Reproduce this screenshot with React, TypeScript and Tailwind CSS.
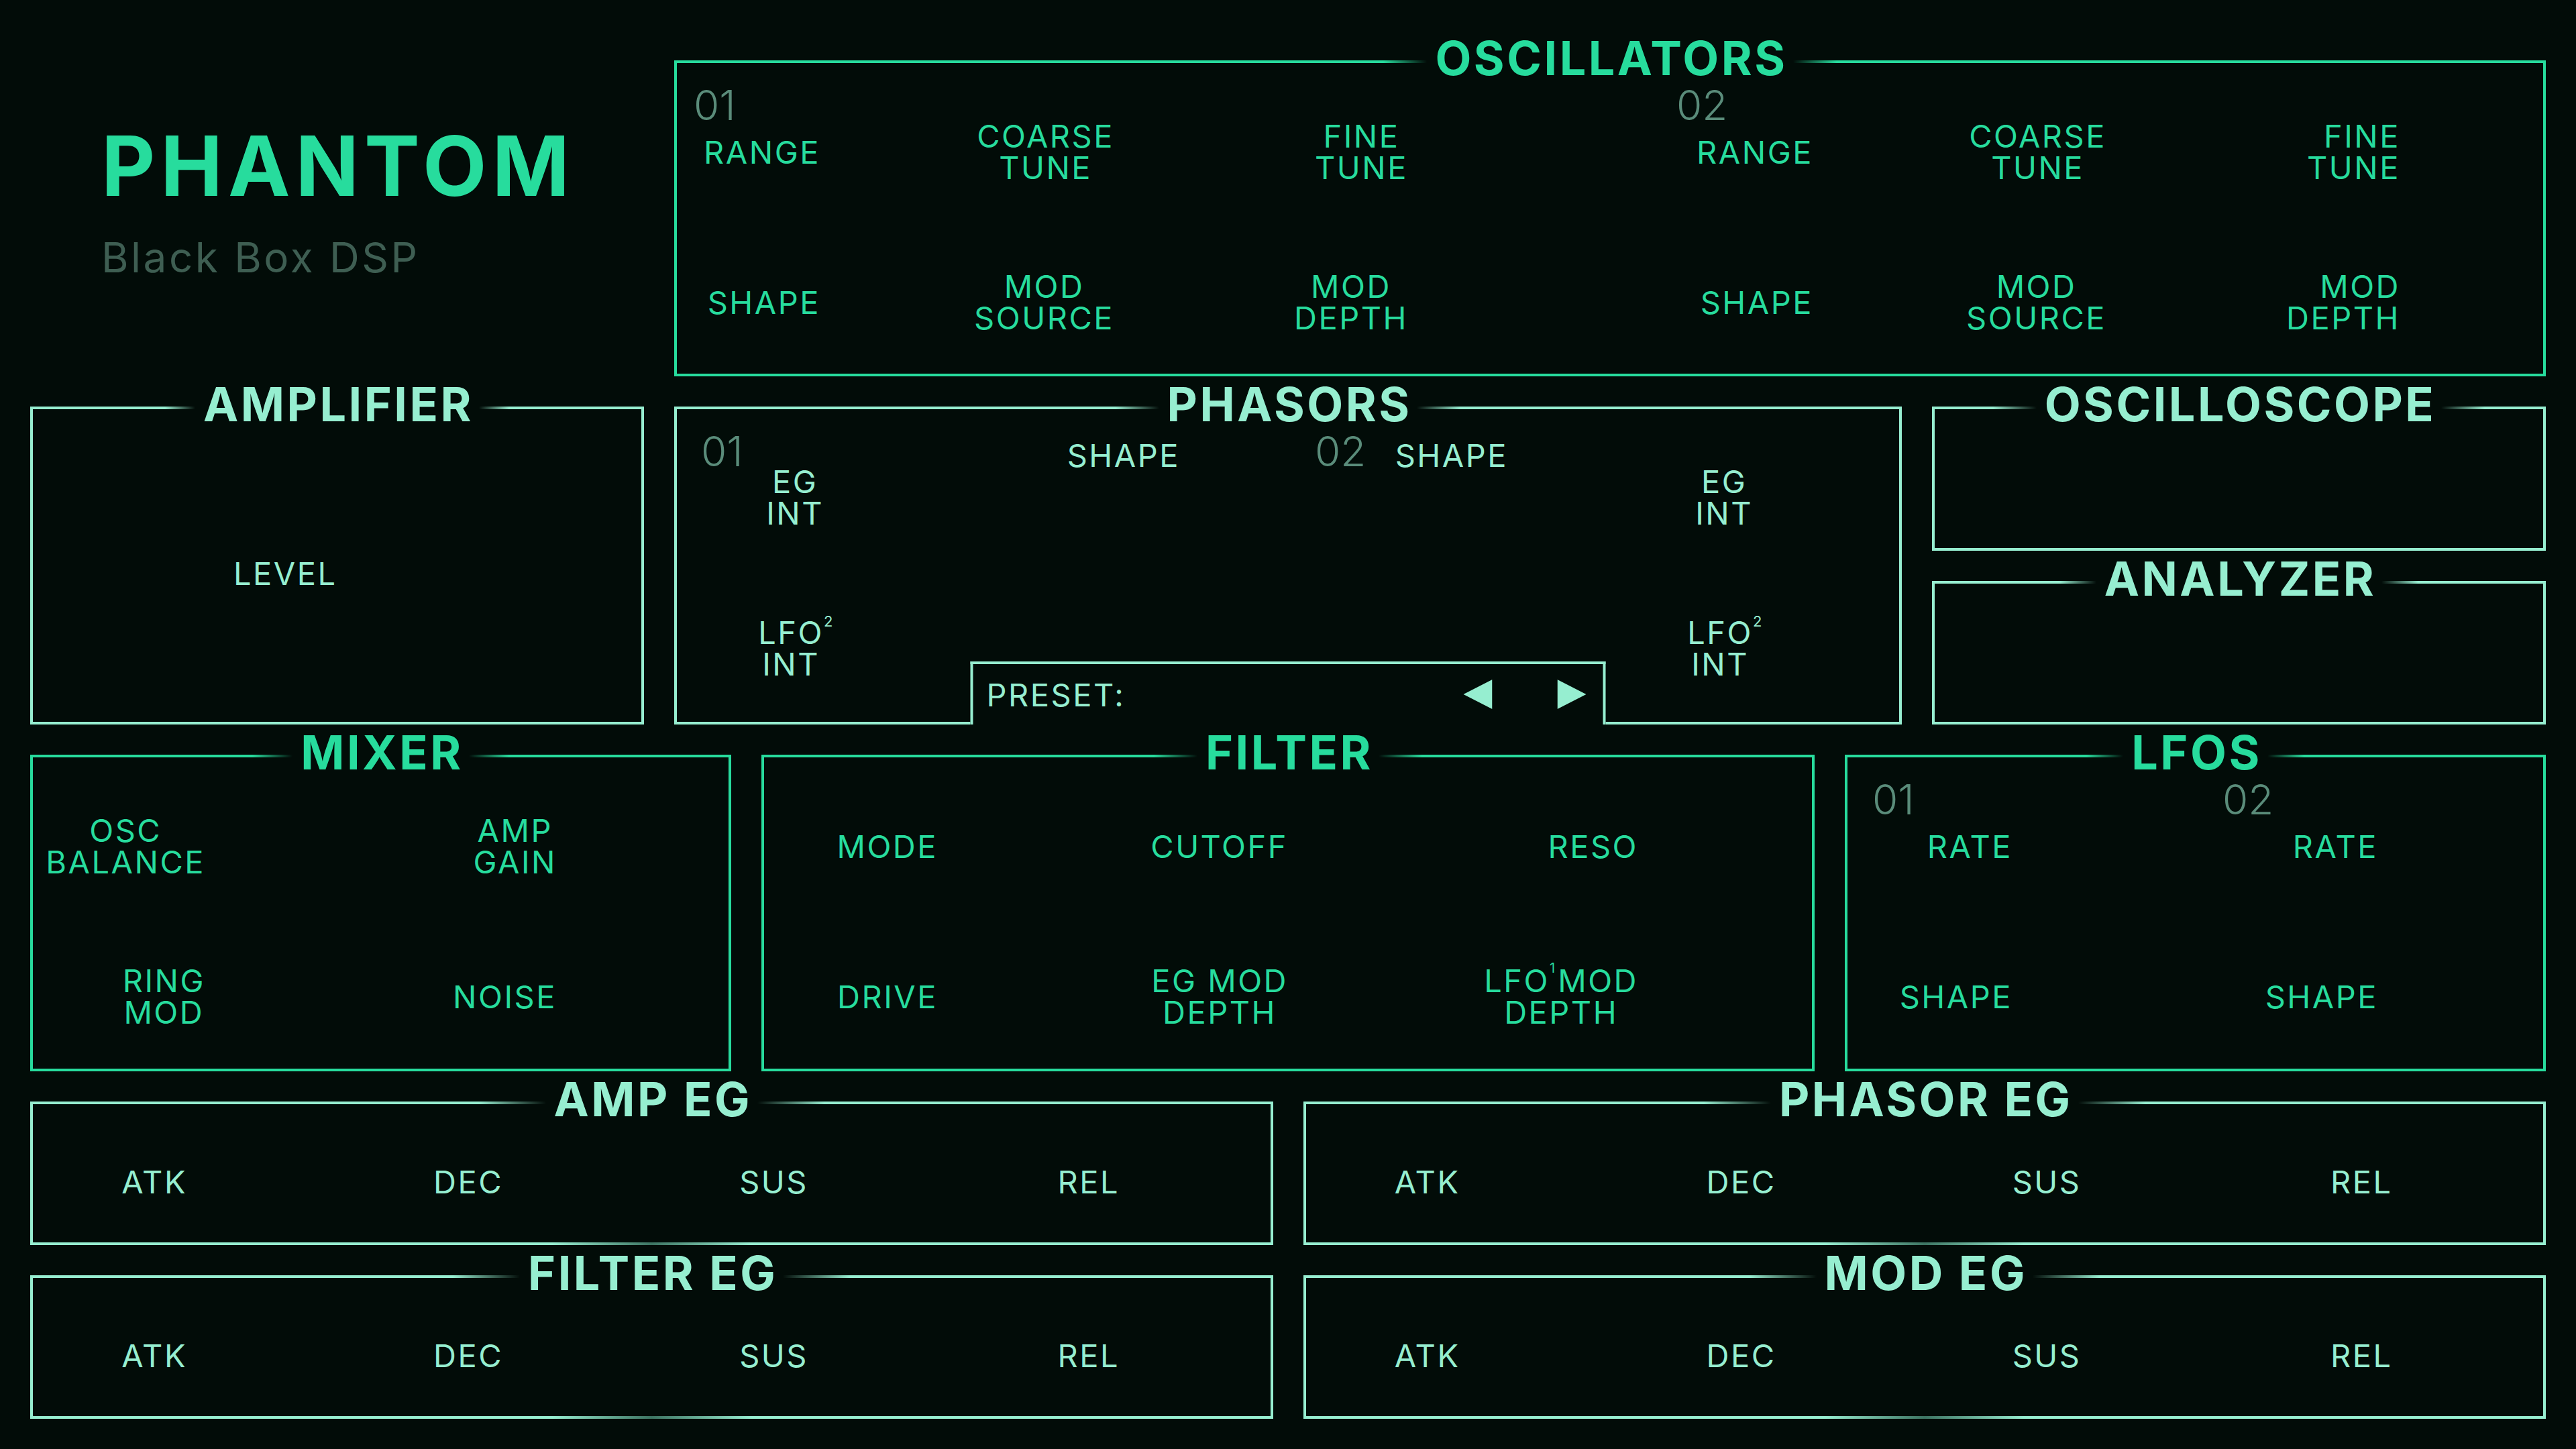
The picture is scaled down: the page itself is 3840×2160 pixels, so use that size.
import React from "react";

type Tone = "green" | "mint";

const tones = {
    green: {
        text: "text-[#27dc9d]",
        bg: "bg-[#27dc9d]",
        from: "from-[#27dc9d]",
        border: "border-[#27dc9d]",
        dim: "bg-[linear-gradient(to_right,#27dc9d_42%,#1d6e52_50%,#27dc9d_58%)]",
    },
    mint: {
        text: "text-[#96eed0]",
        bg: "bg-[#96eed0]",
        from: "from-[#96eed0]",
        border: "border-[#96eed0]",
        dim: "bg-[linear-gradient(to_right,#96eed0_42%,#3d7563_50%,#96eed0_58%)]",
    },
};

interface PanelProps {
    title: string;
    tone: Tone;
    fade?: string;
    dim?: boolean;
    bodyClassName?: string;
    children?: React.ReactNode;
}

// Box with the title sitting on the top line, line fading out next to the title
function Panel({ title, tone, fade = "w-[60px]", dim = false, bodyClassName = "", children }: PanelProps) {
    const t = tones[tone];
    return (
        <div className="flex min-w-0 flex-col">
            <div className="flex h-[4px] items-center">
                <div className="flex h-full flex-1">
                    <div className={`h-full flex-1 ${t.bg}`} />
                    <div className={`h-full ${fade} bg-linear-to-r ${t.from} to-transparent`} />
                </div>
                <h2 className={`mb-[10px] whitespace-nowrap pl-[12px] pr-[8px] text-[70px] font-bold leading-none tracking-[3.5px] ${t.text}`}>
                    {title}
                </h2>
                <div className="flex h-full flex-1">
                    <div className={`h-full ${fade} bg-linear-to-l ${t.from} to-transparent`} />
                    <div className={`h-full flex-1 ${t.bg}`} />
                </div>
            </div>
            <div className={`relative flex-1 border-x-4 ${dim ? "" : "border-b-4"} ${t.border} ${t.text} ${bodyClassName}`}>
                {children}
            </div>
            {dim && <div className={`h-[4px] ${t.dim}`} />}
        </div>
    );
}

function Label({ children, className = "" }: { children: React.ReactNode; className?: string }) {
    return (
        <div className={`flex items-center justify-end ${className}`}>
            <span className="whitespace-nowrap text-center text-[47px] leading-[47px] tracking-[2.5px]">{children}</span>
        </div>
    );
}

function Num({ children, className = "" }: { children: React.ReactNode; className?: string }) {
    return <span className={`text-[62px] font-light leading-none text-[#5a8c7a] ${className}`}>{children}</span>;
}

// superscript that does not take up width (hangs off "LFO")
function HangSup({ n }: { n: string }) {
    return <span className="inline-block w-0 -translate-y-[4px] align-top text-[22px] leading-none tracking-normal">{n}</span>;
}

function Envelope({ title }: { title: string }) {
    return (
        <Panel title={title} tone="mint" fade="w-[100px]" dim bodyClassName="grid grid-cols-[230px_471px_455px_464px_1fr] items-center pt-[24px]">
            <Label>ATK</Label>
            <Label>DEC</Label>
            <Label>SUS</Label>
            <Label>REL</Label>
        </Panel>
    );
}

export default function App() {
    return (
        <div className="min-h-screen w-full bg-[#020c08] px-[45px] pb-[45px] pt-[90px] font-['Inter','Noto_Sans',sans-serif]">
            <div className="flex flex-col gap-[45px]">
                {/* Row 1: logo + oscillators */}
                <div className="grid h-[471px] grid-cols-[915px_1fr] gap-x-[45px]">
                    <div className="flex flex-col items-start pl-[106px] pt-[95px]">
                        <h1 className="text-[124px] font-bold leading-none tracking-[8px] text-[#27dc9d]">PHANTOM</h1>
                        <p className="mt-[44px] text-[62px] leading-none tracking-[3.5px] text-[#3e5e52]">Black Box DSP</p>
                    </div>
                    <Panel title="OSCILLATORS" tone="green" fade="w-[65px]">
                        <div className="grid grid-cols-[214px_438px_438px_604px_437px_1fr] grid-rows-[62px_76px_148px_76px] pt-[32px]">
                            <Num className="col-start-1 row-start-1 ml-[25px]">01</Num>
                            <Num className="col-start-4 row-start-1 ml-[400px]">02</Num>
                            <Label className="col-start-1 row-start-2">RANGE</Label>
                            <Label className="col-start-2 row-start-2">COARSE<br />TUNE</Label>
                            <Label className="col-start-3 row-start-2">FINE<br />TUNE</Label>
                            <Label className="col-start-4 row-start-2">RANGE</Label>
                            <Label className="col-start-5 row-start-2">COARSE<br />TUNE</Label>
                            <Label className="col-start-6 row-start-2 justify-self-start">
                                <span className="inline-block w-[438px] text-right">FINE<br />TUNE</span>
                            </Label>
                            <Label className="col-start-1 row-start-4">SHAPE</Label>
                            <Label className="col-start-2 row-start-4">MOD<br />SOURCE</Label>
                            <Label className="col-start-3 row-start-4">MOD<br />DEPTH</Label>
                            <Label className="col-start-4 row-start-4">SHAPE</Label>
                            <Label className="col-start-5 row-start-4">MOD<br />SOURCE</Label>
                            <Label className="col-start-6 row-start-4 justify-self-start">
                                <span className="inline-block w-[438px] text-right">MOD<br />DEPTH</span>
                            </Label>
                        </div>
                    </Panel>
                </div>

                {/* Row 2: amplifier, phasors, scope + analyzer */}
                <div className="grid h-[474px] grid-cols-[915px_1fr_915px] gap-x-[45px]">
                    <Panel title="AMPLIFIER" tone="mint" fade="w-[45px]" bodyClassName="grid grid-cols-2 items-center pt-[23px]">
                        <Label>LEVEL</Label>
                    </Panel>

                    <Panel title="PHASORS" tone="mint" fade="w-[65px]" bodyClassName="grid grid-cols-2 pt-[32px]">
                        <div className="grid grid-cols-[219px_531px_1fr] items-start">
                            <div className="flex flex-col">
                                <Num className="ml-[36px] self-start">01</Num>
                                <Label className="-mt-[10px]">EG<br />INT</Label>
                                <Label className="mt-[131px]">LFO<HangSup n="2" /><br />INT</Label>
                            </div>
                            <Label className="mt-[13px]">SHAPE</Label>
                        </div>
                        <div className="grid grid-cols-[328px_365px_1fr] items-start">
                            <div className="flex items-start justify-between">
                                <Num className="ml-[40px]">02</Num>
                                <Label className="mt-[13px]">SHAPE</Label>
                            </div>
                            <div className="flex flex-col items-end">
                                <Label className="mt-[52px]">EG<br />INT</Label>
                                <Label className="mt-[131px]">LFO<HangSup n="2" /><br />INT</Label>
                            </div>
                        </div>

                        {/* preset tab cut into the bottom edge */}
                        <div className="absolute bottom-[-4px] left-1/2 flex h-[94px] w-[947px] -translate-x-1/2 items-center border-4 border-b-0 border-[#96eed0] bg-[#020c08] pl-[20px] pr-[25px]">
                            <span className="text-[47px] leading-none tracking-[2.5px]">PRESET:</span>
                            <div className="flex-1" />
                            <svg width="43" height="44" viewBox="0 0 43 44" className="fill-[#96eed0]">
                                <polygon points="43,0 43,44 0,22" />
                            </svg>
                            <svg width="43" height="44" viewBox="0 0 43 44" className="ml-[97px] fill-[#96eed0]">
                                <polygon points="0,0 43,22 0,44" />
                            </svg>
                        </div>
                    </Panel>

                    <div className="grid grid-rows-2 gap-y-[45px]">
                        <Panel title="OSCILLOSCOPE" tone="mint" fade="w-[65px]" />
                        <Panel title="ANALYZER" tone="mint" fade="w-[55px]" />
                    </div>
                </div>

                {/* Row 3: mixer, filter, lfos */}
                <div className="grid h-[472px] grid-cols-[1045px_1fr_1045px] gap-x-[45px]">
                    <Panel title="MIXER" tone="green" fade="w-[60px]">
                        <div className="grid grid-cols-[257px_524px_1fr] grid-rows-[62px_76px_148px_76px] pt-[32px]">
                            <Label className="col-start-1 row-start-2">OSC<br />BALANCE</Label>
                            <Label className="col-start-2 row-start-2">AMP<br />GAIN</Label>
                            <Label className="col-start-1 row-start-4">RING<br />MOD</Label>
                            <Label className="col-start-2 row-start-4">NOISE</Label>
                        </div>
                    </Panel>

                    <Panel title="FILTER" tone="green" fade="w-[65px]">
                        <div className="grid grid-cols-[259px_522px_522px_1fr] grid-rows-[62px_76px_148px_76px] pt-[32px]">
                            <Label className="col-start-1 row-start-2">MODE</Label>
                            <Label className="col-start-2 row-start-2">CUTOFF</Label>
                            <Label className="col-start-3 row-start-2">RESO</Label>
                            <Label className="col-start-1 row-start-4">DRIVE</Label>
                            <Label className="col-start-2 row-start-4">EG MOD<br />DEPTH</Label>
                            <Label className="col-start-3 row-start-4">
                                LFO
                                <span className="mr-[4px] inline-block -translate-y-[5px] align-top text-[20px] leading-none tracking-normal">1</span>
                                MOD<br />DEPTH
                            </Label>
                        </div>
                    </Panel>

                    <Panel title="LFOS" tone="green" fade="w-[55px]">
                        <div className="grid grid-cols-[246px_545px_1fr] grid-rows-[62px_76px_148px_76px] pt-[32px]">
                            <Num className="col-start-1 row-start-1 ml-[37px]">01</Num>
                            <Num className="col-start-2 row-start-1 ml-[313px]">02</Num>
                            <Label className="col-start-1 row-start-2">RATE</Label>
                            <Label className="col-start-2 row-start-2">RATE</Label>
                            <Label className="col-start-1 row-start-4">SHAPE</Label>
                            <Label className="col-start-2 row-start-4">SHAPE</Label>
                        </div>
                    </Panel>
                </div>

                {/* Rows 4-5: envelopes */}
                <div className="grid h-[214px] grid-cols-2 gap-x-[45px]">
                    <Envelope title="AMP EG" />
                    <Envelope title="PHASOR EG" />
                </div>
                <div className="grid h-[214px] grid-cols-2 gap-x-[45px]">
                    <Envelope title="FILTER EG" />
                    <Envelope title="MOD EG" />
                </div>
            </div>
        </div>
    );
}
